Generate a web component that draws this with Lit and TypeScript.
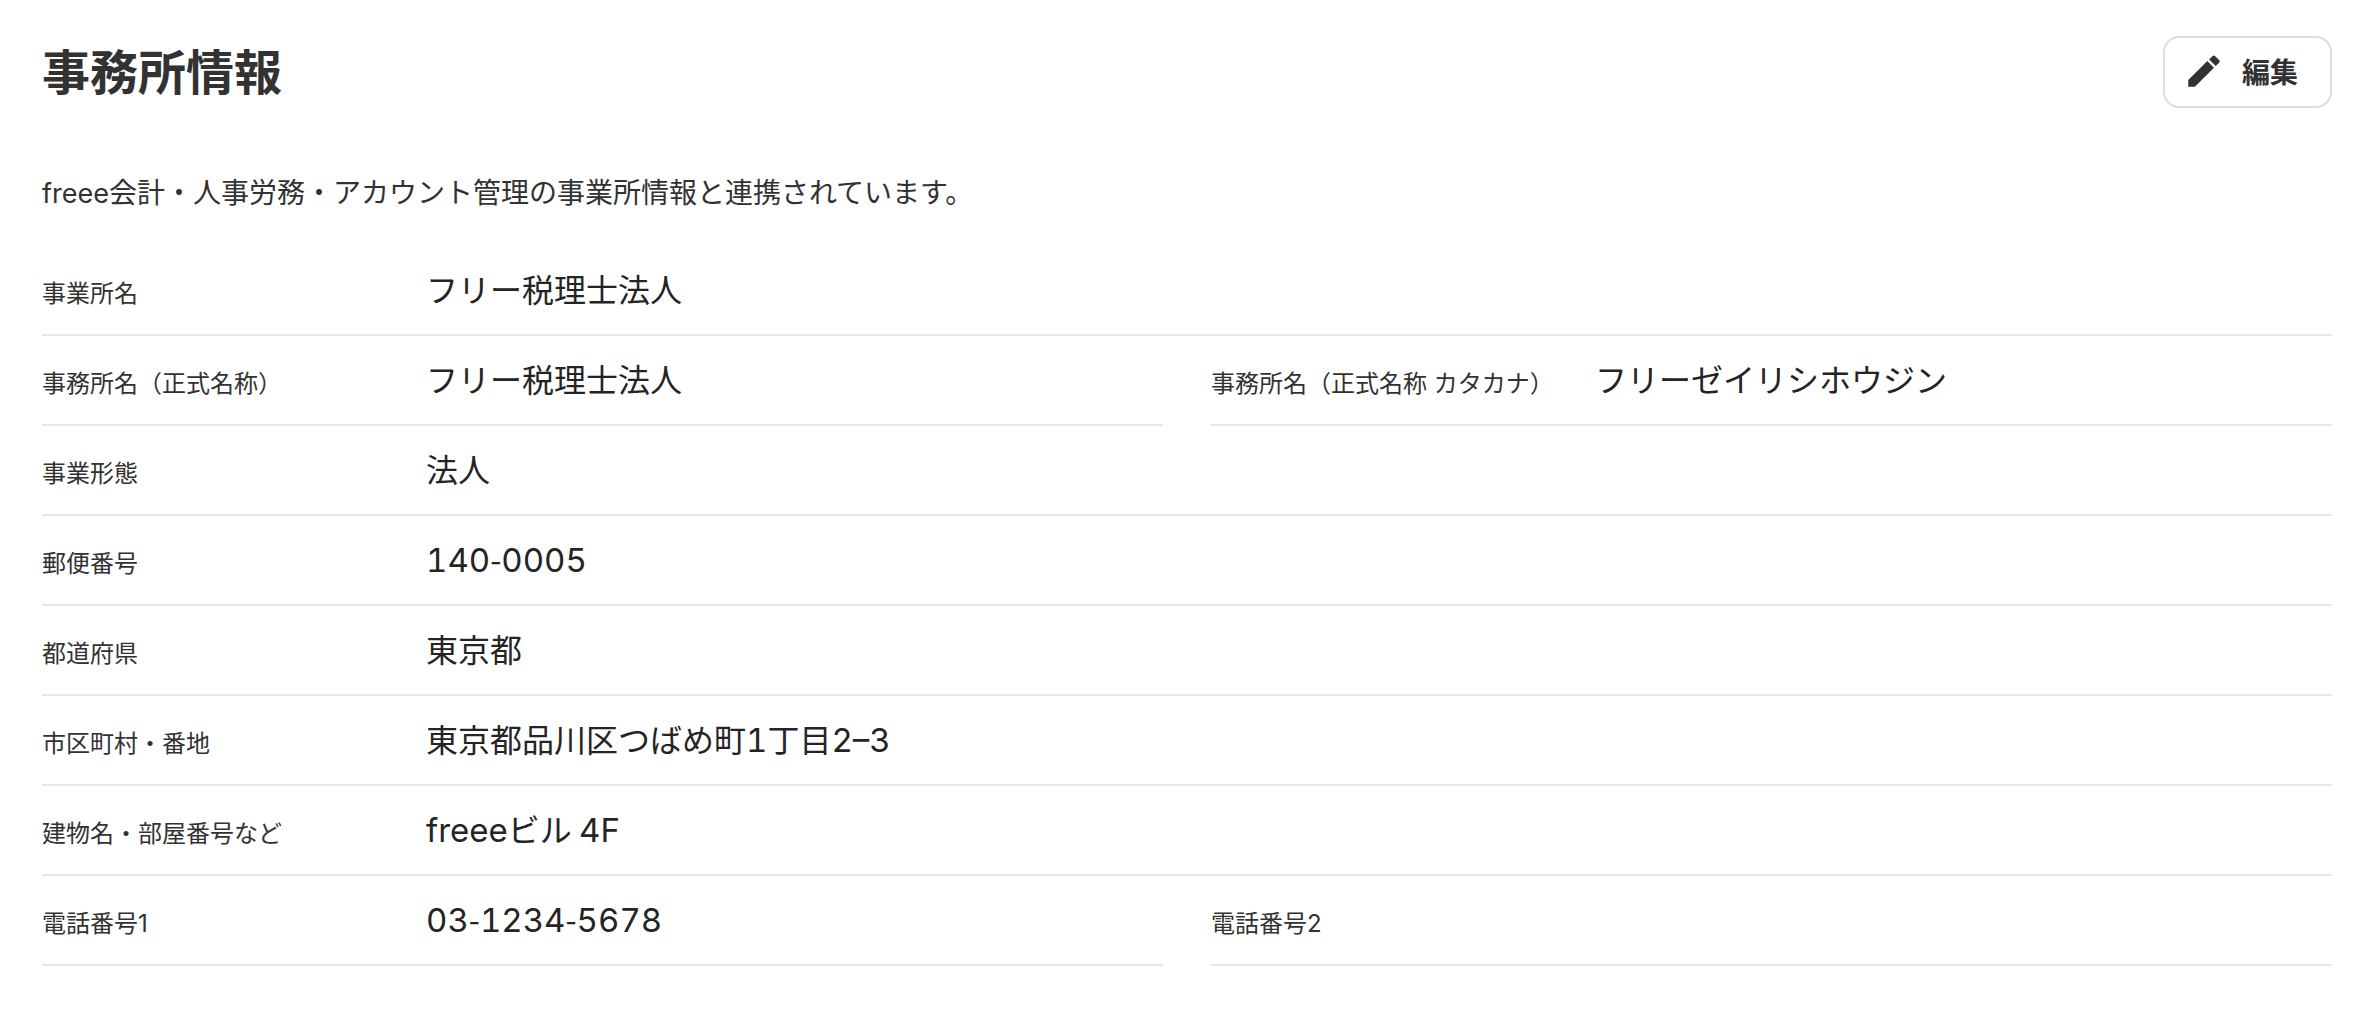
import { LitElement, html, css } from "lit";
import { customElement } from "lit/decorators.js";

interface Field {
  label: string;
  value: string;
}

const ROWS: Field[][] = [
  [{ label: "事業所名", value: "フリー税理士法人" }],
  [
    { label: "事務所名（正式名称）", value: "フリー税理士法人" },
    { label: "事務所名（正式名称 カタカナ）", value: "フリーゼイリシホウジン" },
  ],
  [{ label: "事業形態", value: "法人" }],
  [{ label: "郵便番号", value: "140-0005" }],
  [{ label: "都道府県", value: "東京都" }],
  [{ label: "市区町村・番地", value: "東京都品川区つばめ町1丁目2–3" }],
  [{ label: "建物名・部屋番号など", value: "freeeビル 4F" }],
  [
    { label: "電話番号1", value: "03-1234-5678" },
    { label: "電話番号2", value: "" },
  ],
];

/* Keeps the baseline of a field that has no value. */
const EMPTY = "\u00a0";

@customElement("app-root")
export class AppRoot extends LitElement {
  static styles = css`
    :host {
      display: block;
      box-sizing: border-box;
      padding: 36px 38px 44px 42px;
      background: #fff;
      color: #323232;
      font-family: "Noto Sans CJK JP", sans-serif;
    }
    .header {
      display: flex;
      align-items: flex-start;
      justify-content: space-between;
    }
    .title {
      margin: 0;
      font-size: 48px;
      line-height: 66px;
      font-weight: 700;
    }
    .edit {
      display: flex;
      align-items: center;
      gap: 17px;
      height: 72px;
      box-sizing: border-box;
      padding: 0 32px 2px 18px;
      border: 2px solid #dcdcdc;
      border-radius: 16px;
      background: #fff;
      color: inherit;
      font: inherit;
      font-size: 28px;
      line-height: 42px;
      font-weight: 700;
      cursor: pointer;
    }
    .icon {
      width: 42px;
      height: 42px;
      fill: currentColor;
    }
    .note {
      margin: 62px 0 34px;
      font-size: 28px;
      line-height: 42px;
    }
    .note .latin {
      font-size: 27px;
    }
    .list {
      margin: 0;
    }
    .row {
      display: flex;
      gap: 48px;
    }
    .field {
      flex: 1;
      display: flex;
      align-items: baseline;
      padding: 18px 0 22px;
      border-bottom: 2px solid #e6e6e6;
    }
    .label {
      flex: none;
      width: 384px;
      font-family: "Inter", "Noto Sans CJK JP", sans-serif;
      font-size: 24px;
      line-height: 36px;
    }
    .value {
      flex: 1;
      margin: 0;
      color: #242424;
      font-size: 32px;
      line-height: 48px;
    }
    .latin {
      font-family: "Inter", sans-serif;
      line-height: 1;
    }
    .value .latin {
      font-size: 33px;
      font-variant-numeric: tabular-nums;
    }
  `;

  /* Sets the runs of Latin letters and digits in their own face. */
  private renderText(text: string) {
    return text
      .split(/([A-Za-z0-9–]+)/)
      .map((part, i) => (i % 2 ? html`<span class="latin">${part}</span>` : part));
  }

  private renderField(field: Field) {
    return html`
      <div class="field">
        <dt class="label">${field.label}</dt>
        <dd class="value">${this.renderText(field.value || EMPTY)}</dd>
      </div>
    `;
  }

  render() {
    return html`
      <header class="header">
        <h1 class="title">事務所情報</h1>
        <button class="edit" type="button">
          <svg class="icon" viewBox="0 0 24 24" aria-hidden="true">
            <path
              d="M3 17.2V21h3.8L17.7 10.1l-3.8-3.8zM20.6 7.3c.5-.5.5-1.1 0-1.6l-2.2-2.2c-.5-.5-1.1-.5-1.6 0l-1.9 1.9 3.8 3.8z"
            />
          </svg>
          編集
        </button>
      </header>
      <p class="note">
        ${this.renderText("freee会計・人事労務・アカウント管理の事業所情報と連携されています。")}
      </p>
      <dl class="list">
        ${ROWS.map((row) => html`<div class="row">${row.map((f) => this.renderField(f))}</div>`)}
      </dl>
    `;
  }
}
